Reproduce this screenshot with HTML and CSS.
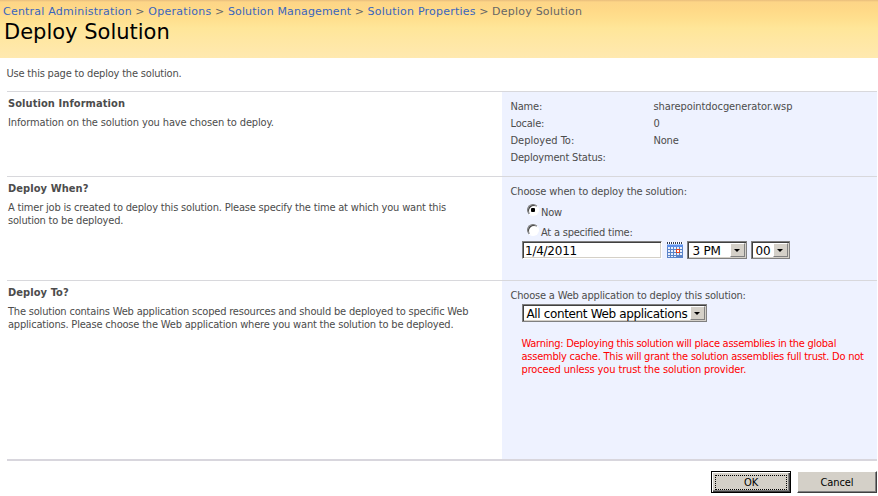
FILE: index.html
```html
<!DOCTYPE html>
<html lang="en">
<head>
<meta charset="utf-8">
<title>Deploy Solution</title>
<link rel="stylesheet" href="styles.css">
</head>
<body>
<header class="banner">
  <nav class="crumbs"><a>Central Administration</a><span class="sep">&gt;</span><a class="wide">Operations</a><span class="sep">&gt;</span><a class="close">Solution Management</a><span class="sep">&gt;</span><a>Solution Properties</a><span class="sep">&gt;</span><span>Deploy Solution</span></nav>
  <h1>Deploy Solution</h1>
</header>
<main>
  <p class="intro">Use this page to deploy the solution.</p>
  <section class="row info">
    <div class="about">
      <h2>Solution Information</h2>
      <p class="loose">Information on the solution you have chosen to deploy.</p>
    </div>
    <div class="fields">
      <dl><dt>Name:</dt><dd class="name">sharepointdocgenerator.wsp</dd><dt>Locale:</dt><dd>0</dd><dt class="even">Deployed To:</dt><dd>None</dd><dt>Deployment Status:</dt><dd></dd></dl>
    </div>
  </section>
  <section class="row when">
    <div class="about">
      <h2>Deploy When?</h2>
      <p>A timer job is created to deploy this solution. Please specify the time at which you want this<br>solution to be deployed.</p>
    </div>
    <div class="fields">
      <p class="loose">Choose when to deploy the solution:</p>
      <label class="option"><i class="radio on"></i><span>Now</span></label>
      <label class="option"><i class="radio"></i><span>At a specified time:</span></label>
      <div class="controls">
        <span class="box date">1/4/2011</span>
        <svg class="calendar" width="16" height="16" viewBox="0 0 16 16" shape-rendering="crispEdges">
          <path fill="#5b84c8" d="M0 1h16v15H0z"/>
          <path fill="#a9c8fa" d="M0 2h16v1H0z"/>
          <path fill="#5c90ec" d="M0 3h16v2H0z"/>
          <path fill="#e9effc" d="M1 5h2v2H1zM4 5h2v2H4zM7 5h2v2H7zM10 5h2v2h-2zM13 5h2v2h-2zM1 8h2v2H1zM4 8h2v2H4zM7 8h2v2H7zM13 8h2v2h-2zM1 11h2v2H1zM4 11h2v2H4zM7 11h2v2H7zM10 11h2v2h-2zM13 11h2v2h-2zM1 14h2v1H1zM4 14h2v1H4zM7 14h2v1H7z"/>
          <path fill="#fff" d="M0 0h16v2H0z"/>
          <path stroke="#333b50" stroke-width="2" stroke-dasharray="1 1" d="M0 1h16"/>
          <path fill="#fff" stroke="#e8431c" d="M9.500 7.500h3v3h-3z"/>
        </svg>
        <span class="box select hour"><span>3 PM</span><i class="arrow"></i></span>
        <span class="box select minute"><span>00</span><i class="arrow"></i></span>
      </div>
    </div>
  </section>
  <section class="row target">
    <div class="about">
      <h2>Deploy To?</h2>
      <p>The solution contains Web application scoped resources and should be deployed to specific Web<br>applications. Please choose the Web application where you want the solution to be deployed.</p>
    </div>
    <div class="fields">
      <p>Choose a Web application to deploy this solution:</p>
      <span class="box select app"><span>All content Web applications</span><i class="arrow"></i></span>
      <p class="warning"><span class="snug">Warning: Deploying this solution will place assemblies in the global</span><br>assembly cache. This will grant the solution assemblies full trust. Do not<br><span class="loose">proceed unless you trust the solution provider.</span></p>
    </div>
  </section>
  <footer><button class="primary"><span>OK</span></button><button><span>Cancel</span></button></footer>
</main>
</body>
</html>
```
FILE: styles.css
```css
* { box-sizing: border-box; }
body { margin: 0; width: 878px; height: 496px; overflow: hidden; background: #fff; color: #4c4c4c; font: 11px/13px "DejaVu Sans Condensed", "DejaVu Sans", sans-serif; letter-spacing: -.19px; }
h1, h2, p, dl, dd { margin: 0; }
.loose { letter-spacing: -.13px; }
.snug { letter-spacing: -.27px; }

.banner { height: 58px; padding: 4px 3px 0; background: linear-gradient(#e8bd7c 0, #fdd587 2px, #ffda88 11px, #ffe08f 20px, #ffe699 28px, #ffe7a3 40px, #ffe9b0 58px); font-family: "DejaVu Sans", sans-serif; }
.crumbs { display: flex; height: 15px; line-height: 15px; font-size: 11px; color: #666; letter-spacing: .22px; white-space: nowrap; }
.crumbs a { color: #3966bf; }
.crumbs .wide { letter-spacing: .28px; }
.crumbs .close { letter-spacing: .13px; }
.sep { width: 16.4px; text-align: center; }
h1 { padding-left: 1px; font-size: 21px; line-height: 26px; font-weight: 400; color: #000; letter-spacing: 0; }

main { width: 877px; padding-left: 7px; }
.intro { height: 33px; padding-top: 9px; margin-left: -.5px; }
.row { display: grid; grid-template-columns: 495px 375px; border-top: 1px solid #d8d8dc; white-space: nowrap; }
.info { height: 85px; }
.when { height: 104px; }
.target { height: 181px; border-bottom: 2px solid #d8d6dd; }
.about { padding: 5px 0 0 1px; }
h2 { margin-bottom: 6px; font-size: 11px; line-height: 13px; letter-spacing: .08px; }
.fields { padding: 8px 0 0 8.500px; background: #eef2ff; }
dl { display: grid; grid-template-columns: 143px 1fr; grid-auto-rows: 17px; }
.name { letter-spacing: -.08px; }
.even { letter-spacing: 0; }

.option { display: flex; align-items: flex-start; height: 20px; margin-left: 16.500px; }
.option span { padding: 8px 0 0 2px; letter-spacing: -.22px; }
.radio { width: 12px; height: 12px; margin-top: 6px; border: 1px solid; border-color: #777 #fff #fff #777; border-radius: 50%; background: #fff; box-shadow: inset 1px 1px #444; }
.on { background: radial-gradient(circle at 5px 5px, #000 0 2px, #fff 2.500px); }

.controls { display: flex; align-items: center; margin-top: 3px; }
.box { display: flex; align-items: center; height: 18px; padding: 0 2px 0 4px; background: #fff; border: 1px solid; border-color: #808080 #fff #fff #808080; box-shadow: inset 1px 1px #404040, inset -1px -1px #d4d0c8; color: #000; font: 12px/14px "DejaVu Sans", sans-serif; letter-spacing: -.25px; }
.date { width: 140px; margin-left: 11px; padding: 1px 0 0 2.500px; }
.select { justify-content: space-between; padding-left: 5px; letter-spacing: -.2px; }
.select > span { padding-top: 1px; }
.select { border-color: #808080; }
.arrow { display: grid; place-items: center; flex: none; width: 15px; height: 14px; margin-right: -1px; background: #d4d0c8; border: 1px solid; border-color: #fff #808080 #808080 #fff; }
.arrow::before { content: ""; border: 3px solid transparent; border-top-color: #000; border-bottom: 0; }
.hour { width: 60px; }
.minute { width: 39px; margin-left: 4px; padding-left: 4px; }
.app { width: 185px; margin: 2px 0 0 11px; padding-left: 4px; letter-spacing: -.36px; }
.calendar { margin: 0 4px 0 5px; }
.warning { margin: 15px 0 0 11px; color: #f00; letter-spacing: -.23px; }

footer { display: flex; justify-content: flex-end; gap: 6px; padding-top: 10px; }
button { width: 80px; height: 22px; padding: 3px; background: #d4d0c8; border: 1px solid; border-color: #fff #404040 #404040 #fff; box-shadow: inset -1px -1px #808080; color: #000; font: inherit; letter-spacing: -.1px; }
button span { display: block; padding-top: 1px; line-height: 13px; }
.primary { border-color: #000; box-shadow: inset 1px 1px #fff, inset -1px -1px #404040, inset -2px -2px #808080; }
.primary span { border: 1px dotted #000; line-height: 12px; }
```
